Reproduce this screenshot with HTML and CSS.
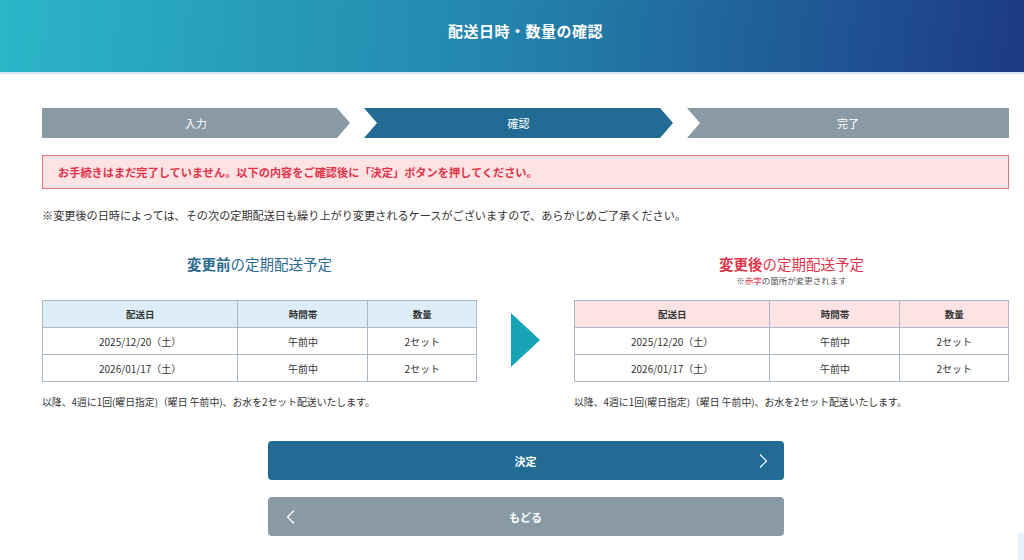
FILE: index.html
```html
<!DOCTYPE html>
<html lang="ja">
<head>
    <meta charset="UTF-8">
    <meta name="viewport" content="width=device-width, initial-scale=1.0">
    <title>配送日時・数量の確認</title>
    <link rel="stylesheet" href="styles.css">
</head>
<body>

<header class="page-header">
    <h1>配送日時・数量の確認</h1>
</header>

<main class="content">
    <!-- ステップ -->
    <ol class="steps">
        <li class="step step-first">入力</li>
        <li class="step step-mid is-current">確認</li>
        <li class="step step-last">完了</li>
    </ol>

    <div class="alert">お手続きはまだ完了していません。以下の内容をご確認後に「決定」ボタンを押してください。</div>

    <p class="note">※変更後の日時によっては、その次の定期配送日も繰り上がり変更されるケースがございますので、あらかじめご了承ください。</p>

    <div class="compare">
        <section class="plan plan-before">
            <div class="plan-head">
                <h2 class="plan-title"><strong>変更前</strong>の定期配送予定</h2>
            </div>
            <table class="plan-table">
                <tr><th class="c-date">配送日</th><th class="c-time">時間帯</th><th>数量</th></tr>
                <tr><td>2025/12/20（土）</td><td>午前中</td><td>2セット</td></tr>
                <tr><td>2026/01/17（土）</td><td>午前中</td><td>2セット</td></tr>
            </table>
            <p class="plan-foot">以降、4週に1回(曜日指定)（曜日 午前中)、お水を2セット配送いたします。</p>
        </section>

        <div class="compare-arrow"><span></span></div>

        <section class="plan plan-after">
            <div class="plan-head">
                <h2 class="plan-title"><strong>変更後</strong>の定期配送予定</h2>
                <p class="plan-sub">※<em>赤字</em>の箇所が変更されます</p>
            </div>
            <table class="plan-table">
                <tr><th class="c-date">配送日</th><th class="c-time">時間帯</th><th>数量</th></tr>
                <tr><td>2025/12/20（土）</td><td>午前中</td><td>2セット</td></tr>
                <tr><td>2026/01/17（土）</td><td>午前中</td><td>2セット</td></tr>
            </table>
            <p class="plan-foot">以降、4週に1回(曜日指定)（曜日 午前中)、お水を2セット配送いたします。</p>
        </section>
    </div>

    <div class="actions">
        <button class="btn btn-submit">決定
            <svg class="btn-icon icon-next" width="10" height="16" viewBox="0 0 10 16"><polyline points="2,1.5 8.5,8 2,14.5" fill="none" stroke="#fff" stroke-width="1.2"/></svg>
        </button>
        <button class="btn btn-back">
            <svg class="btn-icon icon-prev" width="10" height="16" viewBox="0 0 10 16"><polyline points="8,1.5 1.5,8 8,14.5" fill="none" stroke="#fff" stroke-width="1.2"/></svg>
            もどる
        </button>
    </div>
</main>

<div class="float-tab"></div>

</body>
</html>
```

FILE: styles.css
```css
body {
    margin: 0;
    font-family: "Noto Sans CJK JP", "Noto Sans", sans-serif;
    color: #333;
    background-color: #fff;
}
.page-header {
    height: 72px;
    padding: 0 15px 0 42px;
    background: linear-gradient(95deg, #2bb6c8 0%, #2383ac 50%, #1d3986 100%);
    border-bottom: 2px solid #d3e6f1;
    display: flex;
    align-items: center;
    justify-content: center;
}
.page-header h1 {
    margin: 0 0 12px;
    color: #fff;
    font-size: 15px;
    font-weight: bold;
    letter-spacing: 0.5px;
}
.content {
    padding: 34px 15px 0 42px;
}

/* steps */
.steps {
    list-style: none;
    margin: 0;
    padding: 0;
    display: grid;
    grid-template-columns: 308px 309px 1fr;
    column-gap: 14px;
}
.step {
    height: 30px;
    line-height: 30px;
    text-align: center;
    color: #fff;
    font-size: 11px;
    background-color: #8a9aa4;
}
.step.is-current {
    background-color: #216b94;
}
.step-first {
    clip-path: polygon(0 0, calc(100% - 13px) 0, 100% 50%, calc(100% - 13px) 100%, 0 100%);
}
.step-mid {
    clip-path: polygon(0 0, calc(100% - 13px) 0, 100% 50%, calc(100% - 13px) 100%, 0 100%, 13px 50%);
}
.step-last {
    clip-path: polygon(0 0, 100% 0, 100% 100%, 0 100%, 13px 50%);
}

.alert {
    margin-top: 17px;
    height: 32px;
    line-height: 32px;
    padding-left: 15px;
    border: 1px solid #e6737b;
    background-color: #fee3e4;
    color: #e0344a;
    font-size: 11.2px;
    font-weight: bold;
}
.note {
    margin: 16px 0 0;
    font-size: 11.15px;
    line-height: 20px;
    color: #333;
}

/* compare */
.compare {
    margin-top: 26px;
    display: grid;
    grid-template-columns: 1fr 97px 1fr;
}
.plan-head {
    height: 46px;
    padding-top: 3px;
    text-align: center;
}
.plan-title {
    margin: 0;
    font-size: 14.5px;
    line-height: 20px;
    font-weight: normal;
    color: #2a6a8f;
}
.plan-title strong {
    font-weight: bold;
}
.plan-after .plan-title {
    color: #e0344a;
}
.plan-sub {
    margin: 0;
    font-size: 8.5px;
    line-height: 13px;
    color: #555;
}
.plan-sub em {
    font-style: normal;
    color: #e0344a;
}
.plan-table {
    width: 100%;
    border-collapse: collapse;
    font-size: 10px;
}
.plan-table th,
.plan-table td {
    border: 1px solid #a9b8c4;
    height: 26px;
    padding: 0;
    text-align: center;
    font-weight: normal;
    color: #333;
}
.plan-table th {
    font-weight: bold;
    font-size: 9.5px;
    background-color: #deeef8;
}
.plan-after .plan-table th {
    background-color: #fde3e4;
}
.c-date {
    width: 45%;
}
.c-time {
    width: 30%;
}
.plan-foot {
    margin: 12px 0 0;
    font-size: 9.85px;
    line-height: 16px;
    color: #333;
}
.compare-arrow {
    padding-top: 62px;
    padding-left: 34px;
}
.compare-arrow span {
    display: block;
    width: 0;
    height: 0;
    border-top: 27px solid transparent;
    border-bottom: 27px solid transparent;
    border-left: 29px solid #18a3b6;
}

/* buttons */
.actions {
    margin: 31px auto 0;
    width: 516px;
    display: flex;
    flex-direction: column;
    gap: 17px;
}
.btn {
    position: relative;
    height: 39px;
    border: none;
    border-radius: 4px;
    color: #fff;
    font-family: inherit;
    font-size: 11px;
    font-weight: bold;
    cursor: pointer;
}
.btn-submit {
    background-color: #216b94;
}
.btn-back {
    background-color: #8a9aa4;
}
.btn-icon {
    position: absolute;
    top: 12px;
}
.icon-next {
    right: 16px;
}
.icon-prev {
    left: 18px;
}
.float-tab {
    position: fixed;
    right: 0;
    bottom: 0;
    width: 6px;
    height: 27px;
    background-color: #e3f1fa;
    border-radius: 3px 0 0 0;
}
```
